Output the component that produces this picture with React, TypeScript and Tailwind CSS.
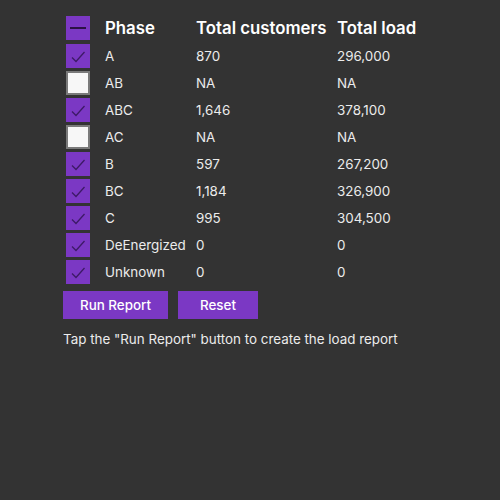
import React, { useState } from "react";

type Row = { phase: string; customers: string; load: string; checked: boolean };

const initialRows: Row[] = [
  { phase: "A", customers: "870", load: "296,000", checked: true },
  { phase: "AB", customers: "NA", load: "NA", checked: false },
  { phase: "ABC", customers: "1,646", load: "378,100", checked: true },
  { phase: "AC", customers: "NA", load: "NA", checked: false },
  { phase: "B", customers: "597", load: "267,200", checked: true },
  { phase: "BC", customers: "1,184", load: "326,900", checked: true },
  { phase: "C", customers: "995", load: "304,500", checked: true },
  { phase: "DeEnergized", customers: "0", load: "0", checked: true },
  { phase: "Unknown", customers: "0", load: "0", checked: true },
];

function Box({ state, onClick }: { state: "on" | "off" | "mixed"; onClick?: () => void }) {
  if (state === "off") {
    return (
      <button
        onClick={onClick}
        className="w-[24px] h-[24px] bg-[#f7f7f7] border-2 border-[#7a7a7a]"
      />
    );
  }
  return (
    <button
      onClick={onClick}
      className="w-[24px] h-[24px] bg-[#7b38c4] flex items-center justify-center"
    >
      {state === "mixed" ? (
        <span className="block w-[16px] h-[2px] bg-[#2b1245]" />
      ) : (
        <svg width="18" height="18" viewBox="0 0 18 18" fill="none">
          <path d="M3 10.5 L7 14.5 L15.5 5" stroke="#3d1a66" strokeWidth="1.3" />
        </svg>
      )}
    </button>
  );
}

export default function App() {
  const [rows, setRows] = useState(initialRows);
  const allOn = rows.every((r) => r.checked);

  return (
    <div
      className="w-[500px] h-[500px] bg-[#333333] text-[#ececec] pt-[13px]"
      style={{ fontFamily: "Inter, 'Noto Sans', sans-serif" }}
    >
      <div className="ml-[66px] grid grid-cols-[39px_91px_141px_auto]">
        <div className="h-[29px] flex items-center">
          <Box state={allOn ? "on" : "mixed"} />
        </div>
        <div className="h-[29px] pt-[2px] flex items-center text-[16.8px] font-semibold text-white">Phase</div>
        <div className="h-[29px] pt-[2px] flex items-center text-[16.8px] font-semibold text-white">Total customers</div>
        <div className="h-[29px] pt-[2px] flex items-center text-[16.8px] font-semibold text-white">Total load</div>
        {rows.map((r, i) => (
          <React.Fragment key={r.phase}>
            <div className="h-[27px] flex items-center">
              <Box
                state={r.checked ? "on" : "off"}
                onClick={() =>
                  setRows(rows.map((x, j) => (j === i ? { ...x, checked: !x.checked } : x)))
                }
              />
            </div>
            <div className="h-[27px] pt-[2px] flex items-center text-[13.4px]">{r.phase}</div>
            <div className="h-[27px] pt-[2px] flex items-center text-[13.4px]">{r.customers}</div>
            <div className="h-[27px] pt-[2px] flex items-center text-[13.4px]">{r.load}</div>
          </React.Fragment>
        ))}
      </div>
      <div className="ml-[63px] mt-[6px] flex gap-[10px]">
        <button className="w-[105px] h-[28px] bg-[#7b38c4] text-white text-[13.4px] font-medium">
          Run Report
        </button>
        <button className="w-[80px] h-[28px] bg-[#7b38c4] text-white text-[13.4px] font-medium">
          Reset
        </button>
      </div>
      <p className="ml-[63px] mt-[10px] text-[13.4px] text-[#ececec]">
        Tap the "Run Report" button to create the load report
      </p>
    </div>
  );
}
